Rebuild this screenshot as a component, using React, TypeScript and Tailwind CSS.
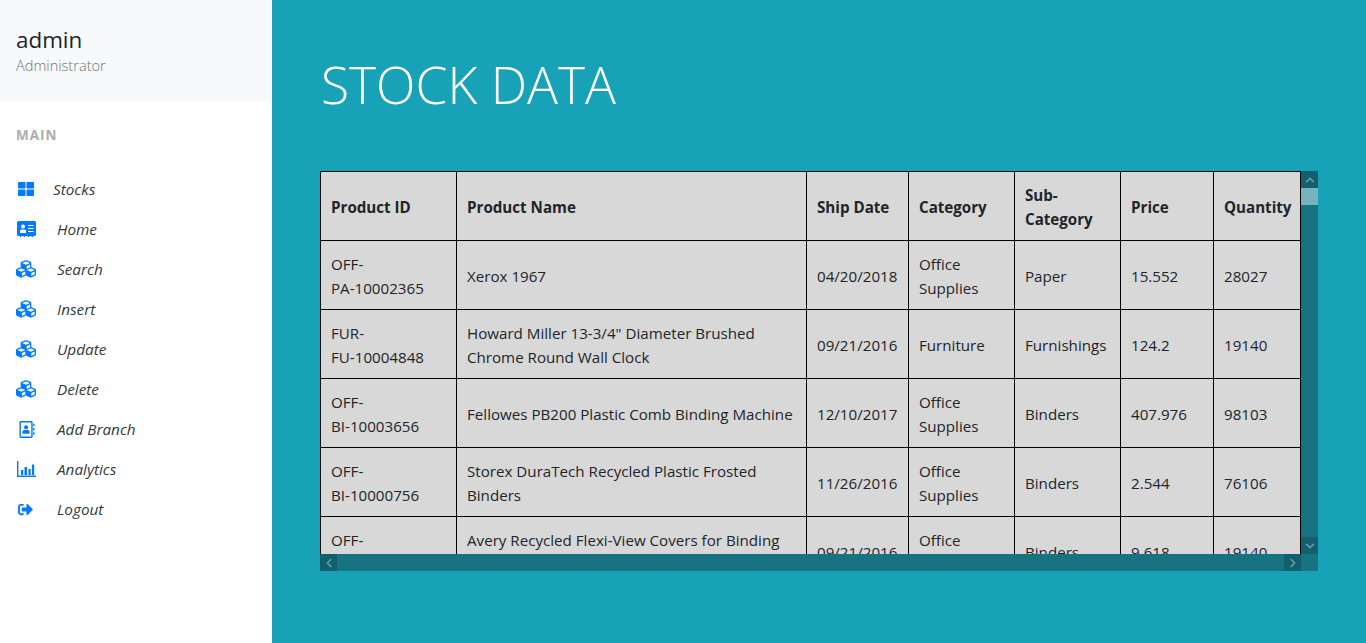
import React from 'react';
import { IconType } from 'react-icons';
import { FaThLarge, FaCubes, FaSignOutAlt, FaChevronUp, FaChevronDown, FaChevronLeft, FaChevronRight } from 'react-icons/fa';

type SvgIcon = React.FC<{ className?: string }>;

const CardIcon: SvgIcon = ({ className }) => (
  <svg viewBox="0 0 19 16" className={className} fill="currentColor">
    <path
      fillRule="evenodd"
      d="M1.5 0h16A1.5 1.5 0 0 1 19 1.5v12a1.5 1.5 0 0 1-1.5 1.5H16v1h-1.5v-1h-2v1H11v-1H8v1H6.500v-1h-2v1H3v-1H1.500A1.500 1.500 0 0 1 0 13.500v-12A1.500 1.500 0 0 1 1.500 0zM6 3.500a2 2 0 1 0 0 4 2 2 0 0 0 0-4zM3 12h6V10a1.500 1.500 0 0 0-1.500-1.500h-3A1.500 1.500 0 0 0 3 10zM11 4v1h5.500V4zm0 3v1h5.500V7zm0 3v1h5.500v-1z"
    />
  </svg>
);

const BookIcon: SvgIcon = ({ className }) => (
  <svg viewBox="0 0 16 18" className={className} fill="currentColor">
    <path
      fillRule="evenodd"
      d="M1.500 0h11A1.500 1.500 0 0 1 14 1.500v15a1.500 1.500 0 0 1-1.500 1.500h-11A1.500 1.500 0 0 1 0 16.500v-15A1.500 1.500 0 0 1 1.500 0zM1.500 1.500v15h11v-15zM7 4.500a2.200 2.200 0 1 1 0 4.400 2.200 2.200 0 0 1 0-4.400zM3.200 13.500v-2.200A1.800 1.800 0 0 1 5 9.500h4a1.800 1.800 0 0 1 1.800 1.800v2.200z"
    />
    <path d="M14.500 3H16v2.500h-1.500zM14.500 7.500H16V10h-1.500zM14.500 12H16v2.500h-1.500z" />
  </svg>
);

const BarsIcon: SvgIcon = ({ className }) => (
  <svg viewBox="0 0 19 16" className={className} fill="currentColor">
    <path d="M0 0h1.400v14.600H19V16H0z" />
    <path d="M4 9h2.200v5H4zM7.500 6H10v8H7.500zM11.500 8h2.200v6h-2.200zM15 3.500h2.200V14H15z" />
  </svg>
);

const navItems: { label: string; icon: IconType | SvgIcon; textClass: string; iconClass: string }[] = [
  { label: 'Stocks', icon: FaThLarge, textClass: 'ml-[17px]', iconClass: 'w-[16px] h-[16px] ml-[2px]' },
  { label: 'Home', icon: CardIcon, textClass: 'ml-[21px]', iconClass: 'w-[19px] h-[16px] ml-[1px]' },
  { label: 'Search', icon: FaCubes, textClass: 'ml-[21px]', iconClass: 'w-[20px] h-[20px]' },
  { label: 'Insert', icon: FaCubes, textClass: 'ml-[21px]', iconClass: 'w-[20px] h-[20px]' },
  { label: 'Update', icon: FaCubes, textClass: 'ml-[21px]', iconClass: 'w-[20px] h-[20px]' },
  { label: 'Delete', icon: FaCubes, textClass: 'ml-[21px]', iconClass: 'w-[20px] h-[20px]' },
  { label: 'Add Branch', icon: BookIcon, textClass: 'ml-[21px]', iconClass: 'w-[16px] h-[17px] ml-[3px]' },
  { label: 'Analytics', icon: BarsIcon, textClass: 'ml-[21px]', iconClass: 'w-[19px] h-[16px] ml-[1px]' },
  { label: 'Logout', icon: FaSignOutAlt, textClass: 'ml-[21px]', iconClass: 'w-[15px] h-[15px] ml-[2px]' },
];

const columns = ['Product ID', 'Product Name', 'Ship Date', 'Category', 'Sub-Category', 'Price', 'Quantity'];

const rows = [
  ['OFF-\nPA-10002365', 'Xerox 1967', '04/20/2018', 'Office Supplies', 'Paper', '15.552', '28027'],
  ['FUR-\nFU-10004848', 'Howard Miller 13-3/4" Diameter Brushed Chrome Round Wall Clock', '09/21/2016', 'Furniture', 'Furnishings', '124.2', '19140'],
  ['OFF-\nBI-10003656', 'Fellowes PB200 Plastic Comb Binding Machine', '12/10/2017', 'Office Supplies', 'Binders', '407.976', '98103'],
  ['OFF-\nBI-10000756', 'Storex DuraTech Recycled Plastic Frosted Binders', '11/26/2016', 'Office Supplies', 'Binders', '2.544', '76106'],
  ['OFF-\nBI-10002794', 'Avery Recycled Flexi-View Covers for Binding Systems', '09/21/2016', 'Office Supplies', 'Binders', '9.618', '19140'],
];

const ScrollButton: React.FC<{ icon: IconType }> = ({ icon: Icon }) => (
  <div className="w-[17px] h-[17px] shrink-0 bg-[#145f6e] flex items-center justify-center">
    <Icon className="w-[10px] h-[10px] text-[#5f9dab]" />
  </div>
);

const App: React.FC = () => {
  return (
    <div className="flex w-[1366px] h-[643px] overflow-hidden bg-[#17a2b8] font-['Open_Sans',sans-serif]">
      <aside className="w-[272px] shrink-0 bg-white">
        <div className="h-[101px] bg-[#f8f9fa] pl-4 pt-[22px]">
          <div className="text-[22.4px] leading-[36px] text-[#212529]">admin</div>
          <div className="text-[14.6px] leading-[14px] font-light text-[#6c757d]">Administrator</div>
        </div>
        <div className="pl-4 pt-[27px] text-[13.5px] leading-[15px] font-bold tracking-[1px] text-[#adadad]">MAIN</div>
        <nav className="mt-[26px]">
          {navItems.map(({ label, icon: Icon, textClass, iconClass }) => (
            <a key={label} className="flex items-center h-10 pl-4">
              <span className="w-[20px] flex justify-start shrink-0">
                <Icon className={`${iconClass} shrink-0 text-[#007bff]`} />
              </span>
              <span className={`${textClass} text-[15.3px] italic text-[#343a40]`}>{label}</span>
            </a>
          ))}
        </nav>
      </aside>

      <main className="flex-1 pl-12 pr-12">
        <h1 className="pt-[50px] pl-[1px] text-[51.5px] leading-[68px] font-light text-white">STOCK DATA</h1>
        <div className="mt-[53px] w-[998px] h-[400px] grid grid-cols-[981px_17px] grid-rows-[383px_17px]">
          <div className="overflow-hidden bg-[#d8d8d8]">
            <table className="w-[981px] table-fixed border-collapse text-[15.15px] leading-[24px] text-[#212529]">
              <colgroup>
                <col className="w-[136px]" />
                <col className="w-[350px]" />
                <col className="w-[102px]" />
                <col className="w-[106px]" />
                <col className="w-[106px]" />
                <col className="w-[93px]" />
                <col className="w-[87px]" />
              </colgroup>
              <thead>
                <tr className="h-[69px]">
                  {columns.map((c) => (
                    <th key={c} className="border border-black pl-2.5 pr-1.5 pt-[11px] pb-[9px] text-left font-bold">{c}</th>
                  ))}
                </tr>
              </thead>
              <tbody>
                {rows.map((row) => (
                  <tr key={row[0]} className="h-[69px]">
                    {row.map((cell, i) => (
                      <td key={i} className="border border-black pl-2.5 pr-1.5 pt-[11px] pb-[9px] whitespace-pre-line">{cell}</td>
                    ))}
                  </tr>
                ))}
              </tbody>
            </table>
          </div>
          <div className="bg-[#177382] flex flex-col">
            <ScrollButton icon={FaChevronUp} />
            <div className="h-[17px] bg-[#77b3bf]" />
            <div className="flex-1" />
            <ScrollButton icon={FaChevronDown} />
          </div>
          <div className="bg-[#177382] flex justify-between">
            <ScrollButton icon={FaChevronLeft} />
            <ScrollButton icon={FaChevronRight} />
          </div>
          <div className="bg-[#177382]" />
        </div>
      </main>
    </div>
  );
};

export default App;
